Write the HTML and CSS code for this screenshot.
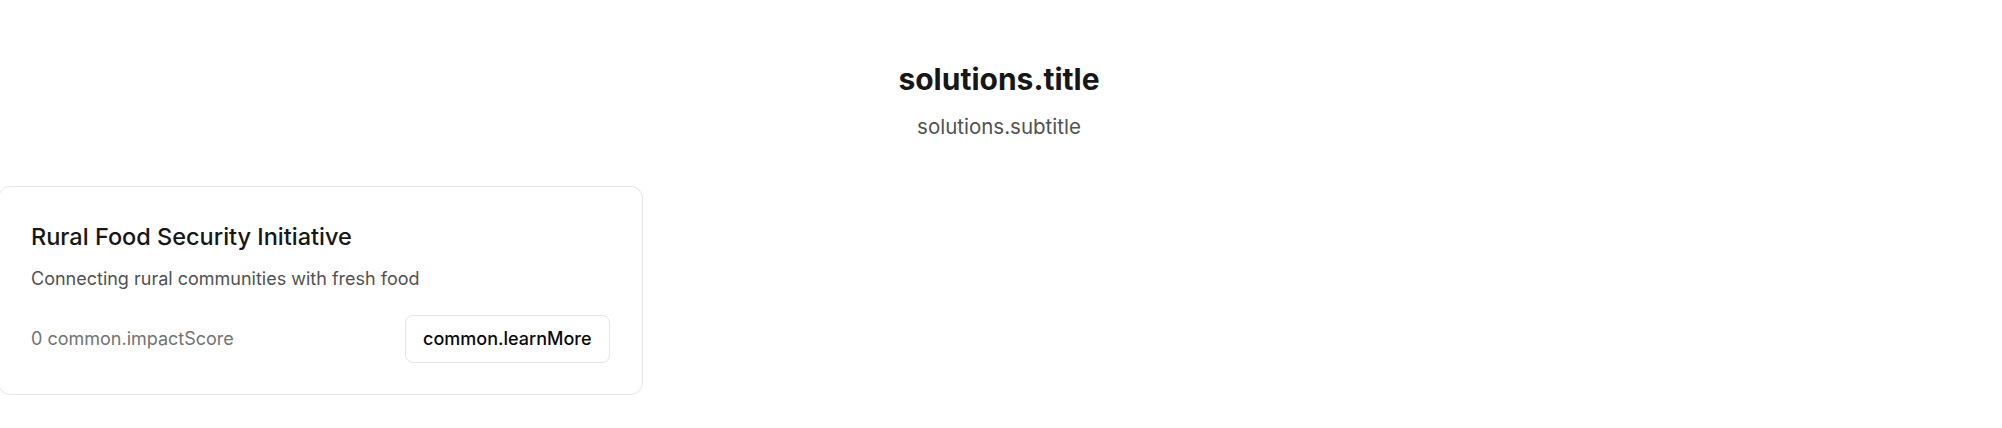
FILE: index.html
```html
<!DOCTYPE html>
<html lang="en">
<head>
<meta charset="utf-8">
<title>Solutions</title>
<link rel="stylesheet" href="styles.css">
</head>
<body>
<section class="solutions">
  <header class="intro">
    <h2 class="intro-title">solutions.title</h2>
    <p class="intro-subtitle">solutions.subtitle</p>
  </header>
  <div class="grid">
    <article class="card">
      <h3 class="card-title">Rural Food Security Initiative</h3>
      <p class="card-desc">Connecting rural communities with fresh food</p>
      <div class="card-footer">
        <span class="score">0 common.impactScore</span>
        <button class="btn" type="button">common.learnMore</button>
      </div>
    </article>
  </div>
</section>
</body>
</html>
```
FILE: styles.css
```css
* { box-sizing: border-box; }
html, body {
  margin: 0;
  padding: 0;
  background: #ffffff;
}
body {
  font-family: Inter, "Noto Sans", "Liberation Sans", sans-serif;
  color: #111111;
  width: 2002px;
  height: 428px;
  overflow: hidden;
}
.solutions {
  padding-top: 61px;
}
.intro {
  text-align: center;
  margin-bottom: 45px;
  padding-right: 4px;
}
.intro-title {
  margin: 0 0 16px;
  font-size: 30px;
  line-height: 36px;
  font-weight: 700;
  color: #171717;
}
.intro-subtitle {
  margin: 0;
  font-size: 20.5px;
  line-height: 28px;
  color: #525252;
}
.grid {
  display: grid;
  grid-template-columns: 645px;
  margin-left: -2px;
}
.card {
  border: 1px solid #e5e5e5;
  border-radius: 12px;
  padding: 34px 32px 31px;
  background: #ffffff;
}
.card-title {
  margin: 0;
  font-size: 23.5px;
  line-height: 32px;
  font-weight: 500;
  color: #171717;
}
.card-desc {
  margin: 12px 0 0;
  font-size: 18px;
  line-height: 28px;
  color: #525252;
}
.card-footer {
  margin-top: 22px;
  display: flex;
  align-items: center;
  justify-content: space-between;
}
.score {
  font-size: 18px;
  line-height: 28px;
  color: #737373;
}
.btn {
  font-family: inherit;
  font-size: 18px;
  line-height: 28px;
  font-weight: 500;
  color: #0a0a0a;
  background: #ffffff;
  border: 1px solid #e5e5e5;
  border-radius: 8px;
  padding: 9px 17.5px;
  cursor: pointer;
}
```
